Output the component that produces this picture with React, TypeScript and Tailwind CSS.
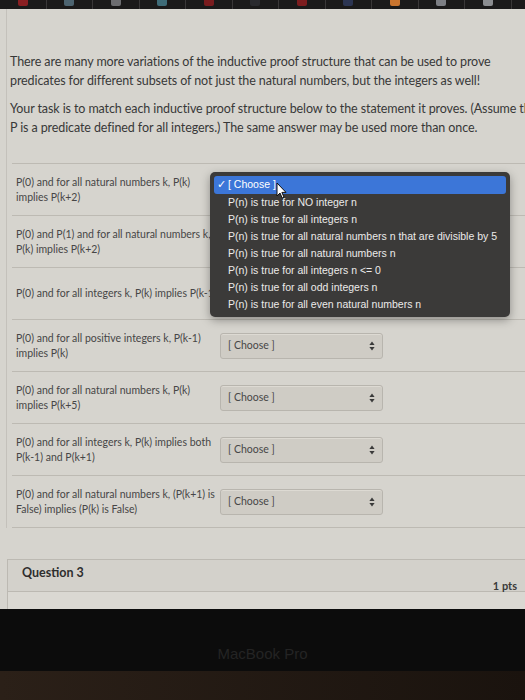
const rows = [
  { lines: ["P(0) and for all natural numbers k, P(k)", "implies P(k+2)"], select: false },
  { lines: ["P(0) and P(1) and for all natural numbers k,", "P(k) implies P(k+2)"], select: false },
  { lines: ["P(0) and for all integers k, P(k) implies P(k-1)"], select: false },
  { lines: ["P(0) and for all positive integers k, P(k-1)", "implies P(k)"], select: true },
  { lines: ["P(0) and for all natural numbers k, P(k)", "implies P(k+5)"], select: true },
  { lines: ["P(0) and for all integers k, P(k) implies both", "P(k-1) and P(k+1)"], select: true },
  { lines: ["P(0) and for all natural numbers k, (P(k+1) is", "False) implies (P(k) is False)"], select: true },
];

const options = [
  "P(n) is true for NO integer n",
  "P(n) is true for all integers n",
  "P(n) is true for all natural numbers n that are divisible by 5",
  "P(n) is true for all natural numbers n",
  "P(n) is true for all integers n <= 0",
  "P(n) is true for all odd integers n",
  "P(n) is true for all even natural numbers n",
];

const tabIcons = [
  "bg-[#8a1f22]",
  "bg-[#4d6470]",
  "bg-[#6d6d70]",
  "bg-[#3f6c78]",
  "bg-[#7a1c1e]",
  "bg-[#2a2a2e]",
  "bg-[#7d1d1f]",
  "bg-[#2c3552]",
  "bg-[#c9752f]",
  "bg-[#7d7f84]",
  "bg-[#8b8d90]",
];

function TopBar() {
  return (
    <div className="flex h-[9px] bg-[#1b1a1a]">
      {tabIcons.map((c, i) => (
        <div key={i} className="flex h-full w-[46.5px] shrink-0 justify-center border-r border-[#3a3838]">
          <div className={`h-[6px] w-[10px] rounded-b-[2px] ${c}`} />
        </div>
      ))}
    </div>
  );
}

function ChooseSelect() {
  return (
    <div className="flex h-[26px] w-[163px] items-center justify-between rounded-[3px] border border-[#b8b5ae] bg-[#cfccc5] pl-[7px] pr-[7px] text-[10.5px] text-[#474747] shadow-[inset_0_1px_0_#dddad3]">
      <span>[ Choose ]</span>
      <svg width="6" height="10" viewBox="0 0 6 10">
        <path d="M3 0.5 L5.6 4 H0.4 Z" fill="#3a3a3a" />
        <path d="M3 9.5 L5.6 6 H0.4 Z" fill="#3a3a3a" />
      </svg>
    </div>
  );
}

function Cursor() {
  return (
    <svg className="absolute left-[62px] top-[6px]" width="11" height="17" viewBox="0 0 11 17">
      <path
        d="M1 1 L1 14 L4 11 L6.2 16 L8 15.2 L5.9 10.4 L10 10.4 Z"
        fill="#ffffff"
        stroke="#111111"
        strokeWidth="1"
        strokeLinejoin="round"
      />
    </svg>
  );
}

function DropdownMenu() {
  return (
    <div
      className="absolute left-[198px] top-[9px] z-10 w-[300px] rounded-[5px] bg-[#3b3a39] px-[4px] py-[4px] text-[10.5px] text-[#ecebea] shadow-[0_3px_10px_rgba(0,0,0,0.35)]"
      style={{ fontFamily: '"Liberation Sans", Arial, sans-serif' }}
    >
      <div className="relative flex h-[18px] items-center rounded-[3px] bg-[#3c76d8] pl-[3px] text-white">
        <span className="w-[11px]">✓</span>
        <span>[ Choose ]</span>
        <Cursor />
      </div>
      {options.map((o) => (
        <div key={o} className="flex h-[17px] items-center pl-[14px]">
          {o}
        </div>
      ))}
    </div>
  );
}

export default function App() {
  return (
    <div
      className="relative h-[700px] w-[525px] overflow-hidden bg-[#d6d4ce] text-[#383838]"
      style={{ fontFamily: 'Lato, "Open Sans", sans-serif' }}
    >
      <TopBar />

      <div className="ml-[6px] border-l border-[#c4c1bb]">
        <div className="pl-[3px] pt-[43px] text-[12.5px] leading-[19px] tracking-[-0.1px]">
          <p>
            There are many more variations of the inductive proof structure that can be used to prove
            <br />
            predicates for different subsets of not just the natural numbers, but the integers as well!
          </p>
          <p className="mt-[9px] whitespace-nowrap">
            Your task is to match each inductive proof structure below to the statement it proves. (Assume that
            <br />P is a predicate defined for all integers.) The same answer may be used more than once.
          </p>
        </div>

        <div className="relative ml-[5px] mt-[26px]">
          {rows.map((r, i) => (
            <div
              key={i}
              className="flex h-[52px] items-center border-t border-[#bdbab3] pl-[4px] text-[10.5px] leading-[15px] text-[#464646]"
            >
              <div className="w-[204px] shrink-0 whitespace-nowrap">
                {r.lines.map((l, j) => (
                  <div key={j}>{l}</div>
                ))}
              </div>
              {r.select && <ChooseSelect />}
            </div>
          ))}
          <div className="border-t border-[#bdbab3]" />
          <DropdownMenu />
        </div>
      </div>

      <div className="ml-[7px] mt-[31px] border-l border-t border-[#bcb9b2]">
        <div className="flex h-[32px] items-center justify-between border-b border-[#bcb9b2] bg-[#d3d1cb] pl-[14px] pr-[8px]">
          <span className="pb-[4px] text-[12.5px] font-bold text-[#2e2e2e]">Question 3</span>
          <span className="pt-[22px] text-[11px] font-bold text-[#3a3a3a]">1 pts</span>
        </div>
        <div className="h-[17px] bg-[#dad8d2]" />
      </div>

      <div className="flex h-[62px] items-center justify-center bg-[#0c0c0c]">
        <span
          className="mt-[28px] text-[15px] text-[#242424]"
          style={{ fontFamily: '"Liberation Sans", Arial, sans-serif' }}
        >
          MacBook Pro
        </span>
      </div>
      <div className="h-[40px] bg-gradient-to-r from-[#2b2018] to-[#1a130e]" />
    </div>
  );
}
